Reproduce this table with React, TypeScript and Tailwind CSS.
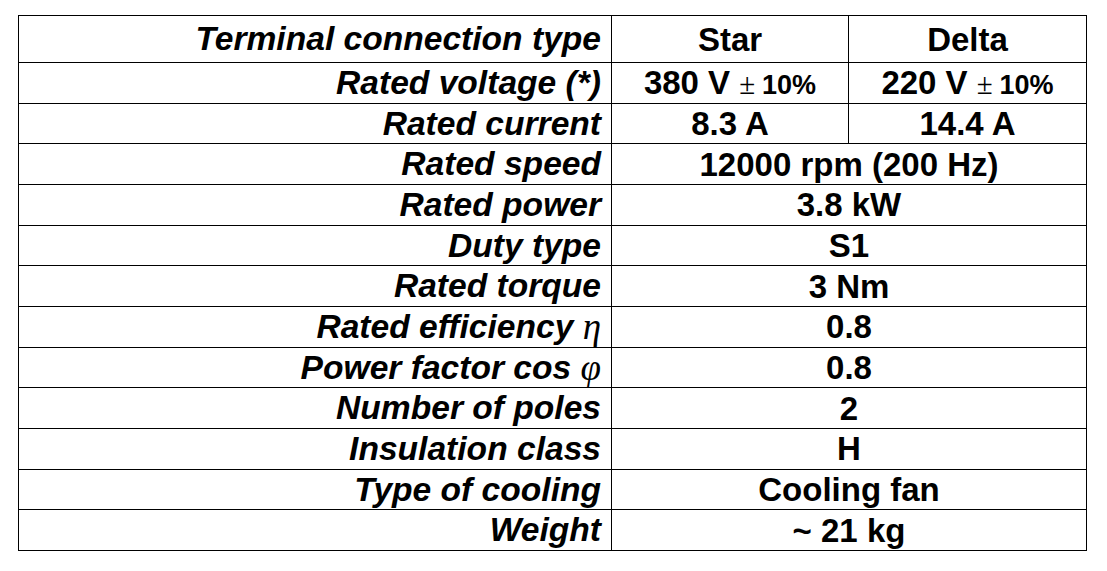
import React from "react";

const font = { fontFamily: '"Liberation Sans", Arial, sans-serif' };

function Label({ children }: { children: React.ReactNode }) {
  return (
    <div className="bg-white flex items-center justify-end pr-[10px] text-[33.6px] leading-none font-bold italic text-black whitespace-nowrap">
      {children}
    </div>
  );
}

function Val({ children, span }: { children: React.ReactNode; span?: boolean }) {
  return (
    <div
      className={
        (span ? "col-span-2 " : "") +
        "bg-white flex items-center justify-center text-[33px] leading-none font-bold text-black whitespace-nowrap"
      }
    >
      {children}
    </div>
  );
}

function Tol({ main }: { main: string }) {
  return (
    <span className="flex items-baseline">
      <span>{main}</span>
      <span
        className="ml-[9px] mr-[7px] text-[29px] font-normal"
        style={{ fontFamily: '"Liberation Serif", "Times New Roman", serif' }}
      >
        ±
      </span>
      <span className="text-[27px]">10%</span>
    </span>
  );
}

const greek = { fontFamily: '"Liberation Serif", "Times New Roman", serif' };

export default function App() {
  return (
    <div className="w-[1107px] h-[571px] bg-white pl-[18px] pt-[15px]" style={font}>
      <div className="w-[1069px] h-[536px] bg-black p-px gap-px grid grid-cols-[592px_236px_1fr] grid-rows-[46px_repeat(12,1fr)]">
        <Label>Terminal connection type</Label>
        <Val>Star</Val>
        <Val>Delta</Val>

        <Label>Rated voltage (*)</Label>
        <Val>
          <Tol main="380 V" />
        </Val>
        <Val>
          <Tol main="220 V" />
        </Val>

        <Label>Rated current</Label>
        <Val>8.3 A</Val>
        <Val>14.4 A</Val>

        <Label>Rated speed</Label>
        <Val span>12000 rpm (200 Hz)</Val>

        <Label>Rated power</Label>
        <Val span>3.8 kW</Val>

        <Label>Duty type</Label>
        <Val span>S1</Val>

        <Label>Rated torque</Label>
        <Val span>3 Nm</Val>

        <Label>
          Rated efficiency&nbsp;
          <span className="font-normal italic text-[37px]" style={greek}>
            η
          </span>
        </Label>
        <Val span>0.8</Val>

        <Label>
          Power factor cos&nbsp;
          <span className="font-normal italic text-[37px]" style={greek}>
            φ
          </span>
        </Label>
        <Val span>0.8</Val>

        <Label>Number of poles</Label>
        <Val span>2</Val>

        <Label>Insulation class</Label>
        <Val span>H</Val>

        <Label>Type of cooling</Label>
        <Val span>Cooling fan</Val>

        <Label>Weight</Label>
        <Val span>~ 21 kg</Val>
      </div>
    </div>
  );
}
